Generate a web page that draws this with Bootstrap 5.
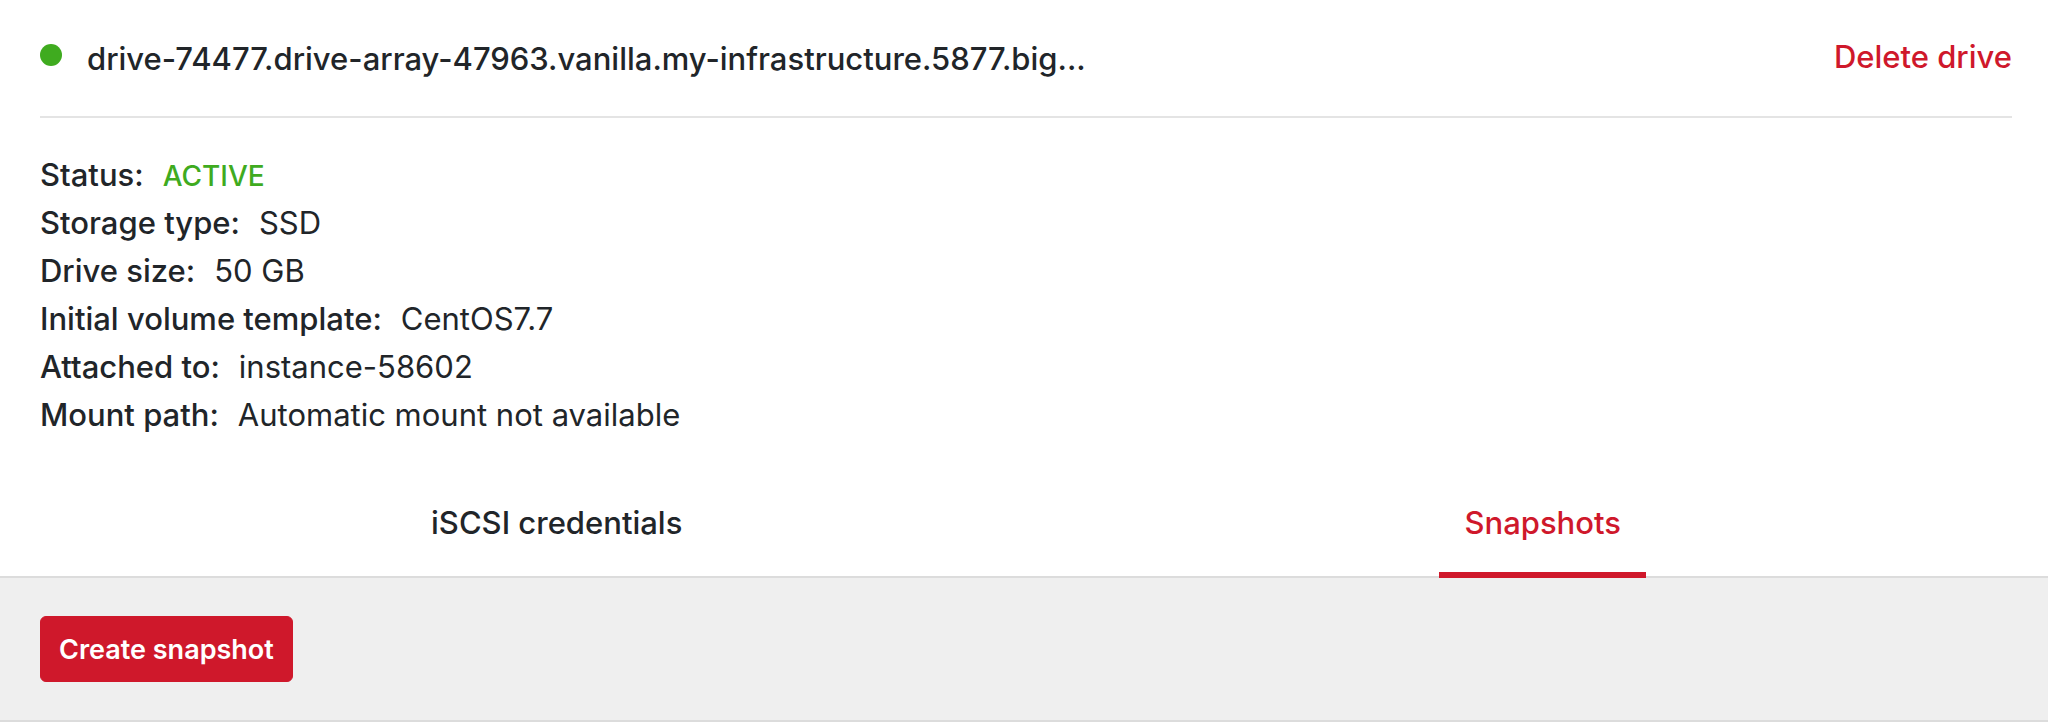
<!DOCTYPE html>
<html lang="en">
<head>
<meta charset="utf-8">
<meta name="viewport" content="width=device-width, initial-scale=1">
<title>Drive details</title>
<link href="https://cdn.jsdelivr.net/npm/bootstrap@5.3.0/dist/css/bootstrap.min.css" rel="stylesheet">
<style>
  body { font-family: Inter, "Liberation Sans", sans-serif; font-size: 31px; line-height: 48px; color: #212529; background: #fff; }
  .drive-section { padding: 0 36px 0 40px; }
  .drive-header { padding: 35px 0 33px; border-bottom: 2px solid #e4e4e4; }
  .status-dot { width: 22px; height: 22px; border-radius: 50%; background: #3fab1f; margin: 9px 25px 0 0; }
  .drive-name { font-size: 31px; line-height: 48px; font-weight: 500; }
  .btn-delete { --bs-btn-color: #cf182b; --bs-btn-hover-color: #a51322; --bs-btn-active-color: #a51322; font-size: 31px; line-height: 44px; font-weight: 500; }
  .drive-facts { padding-top: 33px; }
  .drive-facts > div { height: 48px; }
  .drive-facts dt { font-weight: 500; margin-right: 19px; }
  .status-active { color: #3fab1f; font-size: 28px; font-weight: 500; }
  .drive-tabs { margin-top: 35px; }
  .drive-tabs .nav-item .nav-link { width: auto; padding: 25px 25px; color: #212529; font-weight: 500; border-bottom: 6px solid transparent; margin-bottom: -2px; }
  .drive-tabs .nav-item .nav-link.active { color: #cf182b; border-bottom-color: #cf182b; }
  .snapshot-panel { background: #efefef; border-top: 2px solid #dcdcdc; border-bottom: 2px solid #dcdcdc; padding: 38px 40px; }
  .btn-create { --bs-btn-color: #fff; --bs-btn-bg: #cf182b; --bs-btn-border-color: #cf182b; --bs-btn-hover-color: #fff; --bs-btn-hover-bg: #b31525; --bs-btn-hover-border-color: #b31525; --bs-btn-border-radius: 6px; --bs-btn-padding-x: 18px; font-size: 27px; line-height: 42px; font-weight: 600; padding-top: 12px; padding-bottom: 10px; }
</style>
</head>
<body>
<main>
  <section class="drive-section">
    <header class="drive-header d-flex justify-content-between align-items-start">
      <div class="d-flex align-items-start">
        <span class="status-dot flex-shrink-0"></span>
        <h1 class="drive-name mb-0">drive-74477.drive-array-47963.vanilla.my-infrastructure.5877.big...</h1>
      </div>
      <button type="button" class="btn btn-delete border-0 p-0 text-nowrap">Delete drive</button>
    </header>
    <dl class="drive-facts mb-0">
      <div class="d-flex align-items-baseline"><dt>Status:</dt><dd class="mb-0 status-active">ACTIVE</dd></div>
      <div class="d-flex align-items-baseline"><dt>Storage type:</dt><dd class="mb-0">SSD</dd></div>
      <div class="d-flex align-items-baseline"><dt>Drive size:</dt><dd class="mb-0">50 GB</dd></div>
      <div class="d-flex align-items-baseline"><dt>Initial volume template:</dt><dd class="mb-0">CentOS7.7</dd></div>
      <div class="d-flex align-items-baseline"><dt>Attached to:</dt><dd class="mb-0">instance-58602</dd></div>
      <div class="d-flex align-items-baseline"><dt>Mount path:</dt><dd class="mb-0">Automatic mount not available</dd></div>
    </dl>
    <ul class="nav nav-fill drive-tabs" role="tablist">
      <li class="nav-item d-flex justify-content-center" role="presentation"><a class="nav-link" href="#credentials" role="tab" aria-selected="false">iSCSI credentials</a></li>
      <li class="nav-item d-flex justify-content-center" role="presentation"><a class="nav-link active position-relative" href="#snapshots" role="tab" aria-selected="true">Snapshots</a></li>
    </ul>
  </section>
  <section class="snapshot-panel" id="snapshots">
    <button type="button" class="btn btn-create d-block">Create snapshot</button>
  </section>
</main>
<script src="https://cdn.jsdelivr.net/npm/bootstrap@5.3.0/dist/js/bootstrap.bundle.min.js"></script>
</body>
</html>
